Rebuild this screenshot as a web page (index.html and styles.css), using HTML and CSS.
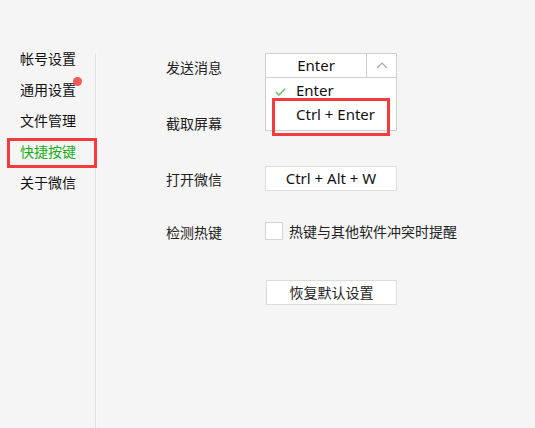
FILE: index.html
```html
<!DOCTYPE html>
<html lang="zh-CN">
<head>
<meta charset="utf-8">
<link rel="stylesheet" href="styles.css">
</head>
<body>
<div class="app">
  <nav class="sidebar">
    <div class="nav-item">帐号设置</div>
    <div class="nav-item has-dot">通用设置</div>
    <div class="nav-item">文件管理</div>
    <div class="nav-item active">快捷按键</div>
    <div class="nav-item">关于微信</div>
  </nav>
  <div class="divider"></div>
  <main class="main">
    <div class="row row-send">
      <span class="label">发送消息</span>
      <div class="select">
        <div class="select-head">
          <span class="select-value">Enter</span>
          <span class="select-arrow">
            <svg width="12" height="7" viewBox="0 0 12 7"><path d="M1 6 L6 1 L11 6" fill="none" stroke="#a8a8a8" stroke-width="1.2"/></svg>
          </span>
        </div>
        <div class="select-list">
          <div class="option checked">
            <svg class="check" width="11" height="8" viewBox="0 0 11 8"><path d="M0.8 4 L4 7 L10.2 0.8" fill="none" stroke="#5cc35c" stroke-width="1.3"/></svg>
            <span>Enter</span>
          </div>
          <div class="option highlighted"><span>Ctrl + Enter</span></div>
        </div>
      </div>
    </div>
    <div class="row row-shot">
      <span class="label">截取屏幕</span>
    </div>
    <div class="row row-open">
      <span class="label">打开微信</span>
      <div class="key-btn">Ctrl + Alt + W</div>
    </div>
    <div class="row row-check">
      <span class="label">检测热键</span>
      <span class="checkbox"></span>
      <span class="check-text">热键与其他软件冲突时提醒</span>
    </div>
    <div class="row row-reset">
      <span class="label"></span>
      <div class="reset-btn">恢复默认设置</div>
    </div>
  </main>
</div>
</body>
</html>
```

FILE: styles.css
```css
html, body {
  margin: 0;
  padding: 0;
  background: #f5f5f5;
  width: 535px;
  height: 428px;
  overflow: hidden;
}
body {
  font-family: "Noto Sans", "Noto Sans CJK SC", sans-serif;
  font-size: 14px;
  color: #1a1a1a;
}
.app {
  display: flex;
  height: 428px;
}
.sidebar {
  width: 95px;
  padding-top: 43px;
  display: flex;
  flex-direction: column;
  font-family: "Noto Sans CJK SC", sans-serif;
}
.nav-item {
  height: 31px;
  line-height: 31px;
  padding-left: 20px;
  position: relative;
  color: #111;
}
.nav-item.has-dot::after {
  content: "";
  position: absolute;
  left: 73px;
  top: 3px;
  width: 9px;
  height: 9px;
  border-radius: 50%;
  background: #f25a5a;
}
.nav-item.active {
  color: #1aad19;
}
.nav-item.active::after {
  content: "";
  position: absolute;
  left: 7px;
  top: 2px;
  width: 84px;
  height: 24px;
  border: 3px solid #f43c3c;
}
.divider {
  width: 1px;
  margin-top: 53px;
  background: #e2e2e2;
  border-right: 1px solid #f9f9f9;
}
.main {
  flex: 1;
  padding-left: 69px;
  padding-top: 53px;
  display: flex;
  flex-direction: column;
}
.row {
  display: flex;
  align-items: center;
  height: 26px;
}
.row-shot { margin-top: 30px; }
.row-open { margin-top: 30px; }
.row-check { margin-top: 27px; }
.row-reset { margin-top: 35px; }
.label {
  width: 99px;
  flex: none;
  font-family: "Noto Sans CJK SC", sans-serif;
  color: #222;
  position: relative;
  top: 1px;
}
.select {
  position: relative;
  width: 132px;
  height: 26px;
  align-self: flex-start;
  font-size: 15px;
}
.select-head {
  box-sizing: border-box;
  height: 25px;
  display: flex;
  background: #fff;
  border: 1px solid #cfcfcf;
}
.select-value {
  flex: 1;
  text-align: center;
  line-height: 23px;
  color: #111;
}
.select-arrow {
  width: 29px;
  border-left: 1px solid #cfcfcf;
  display: flex;
  align-items: center;
  justify-content: center;
}
.select-list {
  position: absolute;
  left: 0;
  top: 25px;
  width: 132px;
  box-sizing: border-box;
  background: #fff;
  border: 1px solid #cfcfcf;
  border-top: none;
  padding-bottom: 3px;
  z-index: 2;
}
.option {
  height: 25px;
  line-height: 25px;
  padding-left: 30px;
  position: relative;
  color: #111;
}
.option.checked {
  height: 24px;
  line-height: 24px;
}
.option .check {
  position: absolute;
  left: 9px;
  top: 10px;
}
.option.highlighted::after {
  content: "";
  position: absolute;
  left: 6px;
  top: -4px;
  width: 112px;
  height: 32px;
  border: 3px solid #f43c3c;
}
.key-btn {
  box-sizing: border-box;
  width: 132px;
  height: 25px;
  line-height: 23px;
  background: #fff;
  border: 1px solid #dcdcdc;
  text-align: center;
  color: #111;
  font-size: 15px;
}
.checkbox {
  box-sizing: border-box;
  width: 18px;
  height: 18px;
  background: #fff;
  border: 1px solid #d4d4d4;
  margin-right: 6px;
}
.check-text {
  font-family: "Noto Sans CJK SC", sans-serif;
  color: #222;
}
.reset-btn {
  box-sizing: border-box;
  width: 131px;
  height: 25px;
  line-height: 23px;
  margin-left: 1px;
  background: #fff;
  border: 1px solid #dcdcdc;
  text-align: center;
  font-family: "Noto Sans CJK SC", sans-serif;
  color: #222;
}
```
